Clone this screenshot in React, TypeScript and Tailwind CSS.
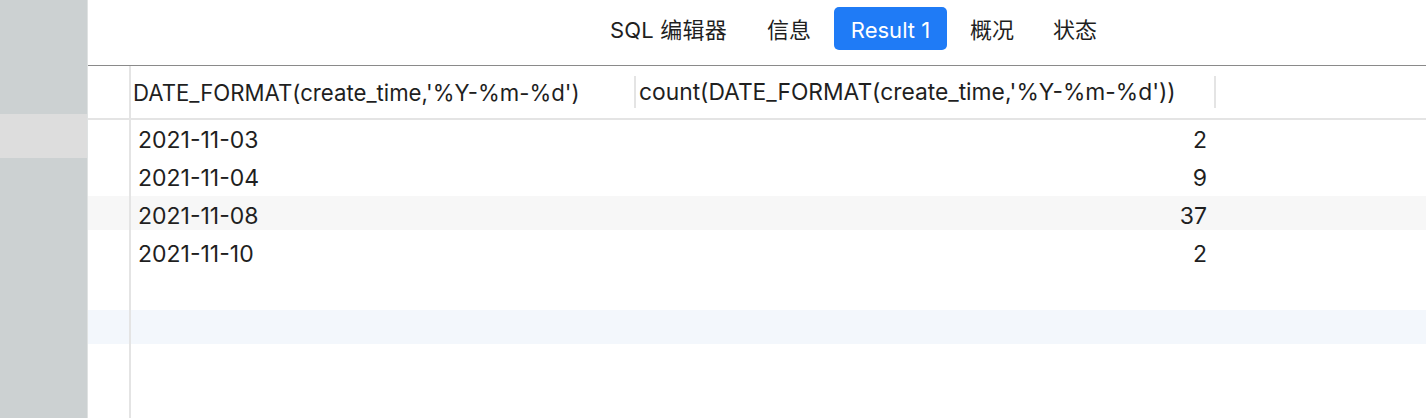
import React from 'react';

const rows = [
  { date: '2021-11-03', count: '2', bg: '' },
  { date: '2021-11-04', count: '9', bg: '' },
  { date: '2021-11-08', count: '37', bg: 'bg-[#f7f7f7]' },
  { date: '2021-11-10', count: '2', bg: '' },
  { date: '', count: '', bg: '' },
  { date: '', count: '', bg: 'bg-[#f3f7fc]' },
  { date: '', count: '', bg: '' },
];

export default function App() {
  return (
    <div className="flex h-[418px] w-[1426px] overflow-hidden bg-white text-[#1f1f1f] [font-family:Inter,'Noto_Sans_CJK_SC',sans-serif]">
      {/* 左侧栏 */}
      <div className="flex w-[88px] flex-col border-r border-[#dfe2e2]">
        <div className="h-[114px] bg-[#ccd1d2]" />
        <div className="h-[44px] bg-[#dddddd]" />
        <div className="flex-1 bg-[#ccd1d2]" />
      </div>

      <div className="flex flex-1 flex-col">
        {/* 顶部标签栏 */}
        <div className="flex h-[66px] items-start border-b border-[#8a8a8a] pl-[522px] pt-[7px] text-[22px]">
          <div className="flex h-[43px] items-center pt-[3px] tracking-[0.2px]">SQL 编辑器</div>
          <div className="ml-[40px] flex h-[43px] items-center pt-[3px]">信息</div>
          <div className="ml-[23px] flex h-[43px] w-[113px] items-center justify-center rounded-[5px] bg-[#1f7bf6] pt-[3px] text-white">Result 1</div>
          <div className="ml-[23px] flex h-[43px] items-center pt-[3px]">概况</div>
          <div className="ml-[39px] flex h-[43px] items-center pt-[3px]">状态</div>
        </div>

        {/* 表头 */}
        <div className="flex h-[54px] border-b-2 border-[#e4e4e4]">
          <div className="w-[41px]" />
          <div className="w-[2px] bg-[#e4e4e4]" />
          <div className="flex w-[503px] items-center pl-[2px] pt-[1px] text-[22.2px]">
            DATE_FORMAT(create_time,'%Y-%m-%d')
          </div>
          <div className="my-auto h-[32px] w-[2px] bg-[#e4e4e4]" />
          <div className="flex w-[578px] items-center whitespace-nowrap pl-[3px] pt-[1px] text-[22.8px]">
            count(DATE_FORMAT(create_time,'%Y-%m-%d'))
          </div>
          <div className="my-auto h-[32px] w-[2px] bg-[#e4e4e4]" />
          <div className="flex-1" />
        </div>

        {/* 数据行 */}
        <div className="flex flex-1 flex-col">
          {rows.map((r, i) => (
            <div key={i} className="flex h-[38px] shrink-0">
              <div className={`h-[34px] w-[41px] ${r.bg}`} />
              <div className="w-[2px] bg-[#e4e4e4]" />
              <div className={`flex h-[34px] flex-1 items-center pt-[6px] text-[23px] ${r.bg}`}>
                <div className="w-[503px] pl-[7px]">{r.date}</div>
                <div className="w-[580px] pr-[7px] text-right">{r.count}</div>
              </div>
            </div>
          ))}
          <div className="flex flex-1">
            <div className="w-[41px]" />
            <div className="w-[2px] bg-[#e4e4e4]" />
          </div>
        </div>
      </div>
    </div>
  );
}
